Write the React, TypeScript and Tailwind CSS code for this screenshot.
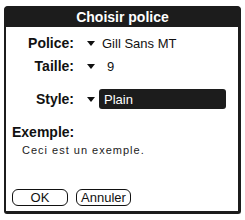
function Arrow() {
  return (
    <svg width="8" height="5" viewBox="0 0 8 5" className="shrink-0">
      <polygon points="0,0 8,0 4,5" fill="#111" />
    </svg>
  );
}

function Row({ label, className, children }: { label: string; className?: string; children: React.ReactNode }) {
  return (
    <div className={`flex h-5 items-center ${className ?? ""}`}>
      <div className="w-[68px] text-right text-[14px] font-bold leading-none text-[#111]">{label}</div>
      <div className="ml-[13px]">
        <Arrow />
      </div>
      <div className="ml-[4px] flex h-5 flex-1 items-center">{children}</div>
    </div>
  );
}

export default function App() {
  return (
    <div className="h-[220px] w-[245px] bg-white pl-[4px] pt-[6px]" style={{ fontFamily: '"Liberation Sans", Arial, sans-serif' }}>
      <div className="flex h-[208px] w-[237px] flex-col rounded-t-[5px] rounded-b-[3px] border-b-[3px] border-l-2 border-r-[3px] border-[#1c1c1c] bg-white">
        {/* title bar */}
        <div className="-mx-[2px] -mr-[3px] flex h-[21px] items-center justify-center rounded-t-[4px] bg-[#1c1c1c]">
          <span className="text-[14px] font-bold leading-none text-white">Choisir police</span>
        </div>

        <Row label="Police:" className="mt-[6px]">
          <span className="pl-[3px] text-[13px] leading-none text-[#111]">Gill Sans MT</span>
        </Row>
        <Row label="Taille:" className="mt-[3px]">
          <span className="pl-[8px] text-[13px] leading-none text-[#111]">9</span>
        </Row>
        <Row label="Style:" className="mt-[13px]">
          <div className="flex h-5 w-[127px] items-center rounded-[3px] bg-[#1c1c1c] px-[5px]">
            <span className="text-[13px] leading-none text-white">Plain</span>
          </div>
        </Row>

        <div className="ml-[6px] mt-[15px] flex h-4 items-center text-[14px] font-bold leading-none text-[#111]">Exemple:</div>
        <div className="ml-[16px] mt-[4px] flex h-3 items-center text-[11px] leading-none tracking-[1px] text-[#222]">
          Ceci est un exemple.
        </div>

        <div className="ml-[6px] mt-[33px] flex gap-[8px]">
          <button className="flex h-[17px] w-[56px] items-center justify-center rounded-[6px] border border-[#111] text-[13px] leading-none text-[#111]">
            OK
          </button>
          <button className="flex h-[17px] w-[55px] items-center justify-center rounded-[6px] border border-[#111] text-[13px] leading-none text-[#111]">
            Annuler
          </button>
        </div>
      </div>
    </div>
  );
}
